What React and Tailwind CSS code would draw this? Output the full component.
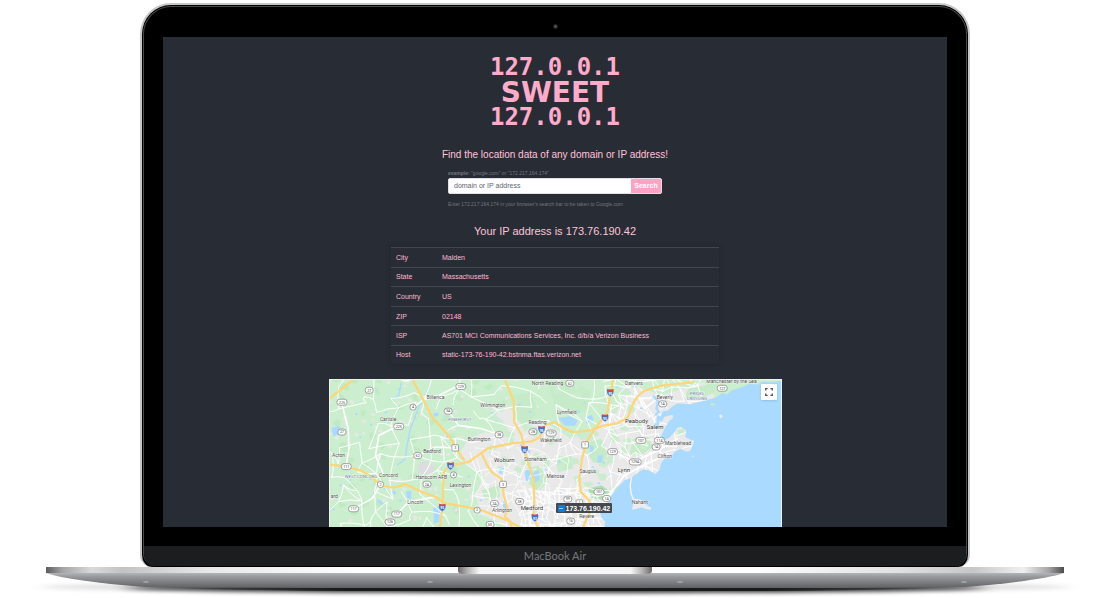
import React from "react";

const details = [
  ["City", "Malden"],
  ["State", "Massachusetts"],
  ["Country", "US"],
  ["ZIP", "02148"],
  ["ISP", "AS701 MCI Communications Services, Inc. d/b/a Verizon Business"],
  ["Host", "static-173-76-190-42.bstnma.ftas.verizon.net"],
];

function seeded(seed) {
  let s = seed;
  return () => {
    s = (s * 16807) % 2147483647;
    return s / 2147483647;
  };
}

// Jittered grid of side streets: [x, y] nodes joined to their right and lower neighbours.
function streets(x0, y0, x1, y1, cell, keep, seed) {
  const rnd = seeded(seed);
  const cols = Math.ceil((x1 - x0) / cell) + 1;
  const rows = Math.ceil((y1 - y0) / cell) + 1;
  const at = [];
  for (let r = 0; r < rows; r++) {
    at.push([]);
    for (let c = 0; c < cols; c++) {
      at[r].push([
        Math.round(x0 + c * cell + (rnd() - 0.5) * cell * 0.9),
        Math.round(y0 + r * cell + (rnd() - 0.5) * cell * 0.9),
      ]);
    }
  }
  let d = "";
  const join = (a, b) => {
    const mx = Math.round((a[0] + b[0]) / 2 + (rnd() - 0.5) * cell * 0.35);
    const my = Math.round((a[1] + b[1]) / 2 + (rnd() - 0.5) * cell * 0.35);
    d += `M${a[0]} ${a[1]}Q${mx} ${my} ${b[0]} ${b[1]}`;
  };
  for (let r = 0; r < rows; r++) {
    for (let c = 0; c < cols; c++) {
      if (c + 1 < cols && rnd() < keep) join(at[r][c], at[r][c + 1]);
      if (r + 1 < rows && rnd() < keep) join(at[r][c], at[r + 1][c]);
      if (r + 1 < rows && c + 1 < cols && rnd() < keep * 0.25) join(at[r][c], at[r + 1][c + 1]);
    }
  }
  return d;
}

function blobs(x0, y0, x1, y1, n, size, seed) {
  const rnd = seeded(seed);
  let d = "";
  for (let i = 0; i < n; i++) {
    const cx = x0 + rnd() * (x1 - x0);
    const cy = y0 + rnd() * (y1 - y0);
    const k = 7;
    for (let j = 0; j < k; j++) {
      const a = (j / k) * Math.PI * 2;
      const rad = size * (0.4 + rnd() * 0.8);
      d += `${j ? "L" : "M"}${Math.round(cx + Math.cos(a) * rad * 1.2)} ${Math.round(cy + Math.sin(a) * rad)}`;
    }
    d += "Z";
  }
  return d;
}

const sideStreets = streets(0, 0, 1000, 460, 50, 0.6, 71);
const cityStreets = streets(585, 345, 880, 460, 17, 0.8, 19);
const townStreets = streets(460, 220, 730, 400, 27, 0.6, 41);
const shoreStreets = streets(850, 10, 1110, 300, 28, 0.55, 97);
const clearings = blobs(10, 10, 640, 450, 120, 6, 23);
const groves = blobs(10, 10, 560, 450, 45, 13, 57);
const parks = blobs(500, 20, 960, 340, 60, 14, 131);
const ponds = blobs(20, 30, 960, 440, 50, 4, 311);

const towns = [
  [331, 70, "Billerica"], [503, 94, "Wilmington"], [188, 138, "Carlisle"], [638, 147, "Reading"],
  [462, 198, "Burlington"], [320, 232, "Bedford"], [39, 244, "Acton"], [189, 305, "Concord"],
  [318, 311, "Hanscom AFB"], [406, 335, "Lexington"], [270, 387, "Lincoln"], [531, 412, "Arlington"],
  [631, 257, "Stoneham"], [26, 369, "ard"], [668, 28, "North Reading"], [678, 200, "Wakefield"],
  [692, 308, "Melrose"], [928, 28, "Danvers"], [1021, 70, "Beverly"], [726, 117, "Lynnfield"],
  [789, 293, "Saugus"], [1021, 249, "Clifton"], [946, 386, "Nahant"], [786, 430, "Revere"],
  [1061, 209, "Marblehead"], [1222, 23, "Manchester by the Sea"],
];
const cities = [
  [538, 259, "Woburn"], [621, 406, "Medford"], [898, 291, "Lynn"], [936, 143, "Peabody"], [992, 162, "Salem"],
];
const shields = [
  [131, 44, "27"], [49, 80, "225"], [263, 95, "4"], [407, 33, "129"], [369, 107, "3A"], [220, 153, "225"],
  [49, 170, "27"], [277, 241, "62"], [62, 274, "111"], [165, 328, "2"], [305, 327, "2A"], [385, 299, "4"],
  [522, 178, "38"], [624, 169, "28"], [679, 173, "129"], [84, 401, "117"], [214, 417, "117"], [194, 441, "126"],
  [508, 385, "2A"], [584, 379, "38"], [456, 405, "2"], [495, 448, "60"], [735, 23, "62"], [1015, 85, "1A"],
  [1194, 38, "127"], [949, 195, "107"], [1005, 195, "114"], [995, 215, "1A"], [864, 229, "129"],
  [932, 260, "129A"], [823, 350, "107"], [846, 370, "1A"], [729, 372, "99"], [738, 438, "16"],
];
const squareShields = [[390, 218, "3"], [534, 328, "3"], [781, 209, "1"], [764, 384, "1"]];
const interstates = [
  [376, 272, "95"], [351, 397, "95"], [650, 163, "95"], [599, 223, "93"], [630, 428, "93"], [857, 51, "95"], [841, 127, "95"],
];

const highways = [
  "M13 68L50 38L84 12",
  "M262 13L290 65L320 125L370 180L400 230L418 256",
  "M540 13L566 75L568 140L590 180L598 222L612 270L626 310L628 370L627 425L638 456",
  "M344 456L352 395L354 330L356 290L372 272L430 260L470 232L490 218L560 204L620 198L645 185L662 148L690 140L715 158L745 170L800 165L830 152L880 143L910 125L925 85L940 62L960 45L1010 30L1065 24L1110 20",
  "M865 13L858 55L848 110L808 164L785 200L772 250L764 310L768 350L792 375L800 400L775 456",
  "M13 268L60 274L105 285L130 300L170 332L205 337L240 327L290 350L330 365L360 385L425 395L470 406L520 425L555 440L560 456",
  "M470 235L486 270L502 292L530 312L536 360L548 400L540 425L562 445L585 456",
];

const sea =
  "M1371 16L1340 20L1315 18L1300 27L1275 25L1250 36L1222 45L1208 57L1195 52L1175 66L1145 74L1095 86L1060 84L1045 92L1030 105L1015 108L1008 124L1000 118L996 130L1012 140L1020 124L1044 118L1047 126L1033 138L1025 152L1016 168L1010 182L1020 194L1036 186L1052 168L1058 158L1070 154L1086 166L1082 184L1104 196L1108 192L1107 206L1098 226L1086 229L1070 221L1054 226L1040 244L1020 250L1010 264L1006 282L993 297L975 286L955 282L937 295L920 308L900 315L880 335L862 358L852 376L840 396L825 410L832 430L842 440L838 460L1380 460L1380 13Z";

const halo = { paintOrder: "stroke" };

function TownMap() {
  return (
    <svg
      viewBox="13 13 1358 443"
      preserveAspectRatio="xMidYMid slice"
      className="block h-[147px] w-full"
      role="img"
      aria-label="Map of the area north of Boston"
    >
      <rect x="0" y="0" width="1400" height="480" fill="#cbeecf" />
      <path d={groves} fill="#c0e9c4" />
      <path d={clearings} fill="#e9e8e6" />
      <path d="M282 262L310 258L330 280L315 300L275 292Z" fill="#dddddf" />
      <path
        d="M470 90L500 85L530 110L550 90L572 120L600 170L640 130L700 165L740 190L770 175L800 200L830 120L900 90L890 30L960 40L1010 60L1140 20L1170 60L1120 300L820 470L560 470L520 440L470 420L450 360L480 300L430 270L400 240L430 190L480 170L560 190L540 140Z"
        fill="#e9e9ea"
      />
      <path
        d="M792 200L830 190L848 235L838 262L806 262L790 235ZM665 13L740 13L800 50L790 100L750 120L690 90ZM600 280L650 270L668 320L640 350L605 320ZM925 190L970 185L985 215L950 240L915 240ZM1090 40L1180 20L1170 50L1130 70L1080 72ZM1058 165L1078 160L1082 174L1062 180ZM470 345L520 330L525 365L480 375ZM690 245L740 240L745 280L700 290ZM560 60L620 50L640 110L600 150L572 130Z"
        fill="#c6ebc9"
      />
      <path d="M790 340L830 330L855 348L838 375L800 368Z" fill="#a9dfb1" />
      <path d={parks} fill="#cbecce" />
      <path
        d="M700 128L735 122L760 132L750 152L720 150ZM598 286L616 282L618 308L604 320ZM624 288L642 285L644 315L630 322ZM324 398L344 392L342 440L326 446ZM242 350L258 347L256 372L244 368ZM524 274L538 278L534 298L522 294ZM200 345L214 350L206 360ZM18 158L42 150L50 175L22 182ZM794 208L806 212L805 235L796 232ZM820 240L834 240L832 260L818 262ZM530 375L545 380L548 398L536 400ZM785 125L802 118L806 135L790 140ZM325 113L342 112L338 122L324 122ZM152 370L168 378L180 392L160 384Z"
        fill="#aadaff"
      />
      <path d={ponds} fill="#aadaff" />
      <path
        d="M312 30L302 62L282 90L270 122L255 160L245 210L240 250L215 270M200 70L220 60L228 20"
        fill="none"
        stroke="#aadaff"
        strokeWidth="4"
      />
      <g fill="none" stroke="#ffffff" strokeLinecap="round">
        <path d={sideStreets} strokeWidth="3" />
        <path d={townStreets} strokeWidth="2" />
        <path d={shoreStreets} strokeWidth="3" />
        <path d={cityStreets} strokeWidth="3" />
        <path
          d="M50 90L68 160L70 220L62 270M220 150L160 180L150 240L175 300M263 95L300 70L330 65L400 30M370 107L400 150L470 160L522 178M165 328L140 370L84 401M277 241L330 215L390 218M214 417L250 380L330 365M930 40L960 100L1010 60M870 230L930 260L1010 220L1060 190M860 350L900 300L960 270L1030 235"
          strokeWidth="5"
        />
      </g>
      <path d={sea} fill="#aadaff" />
      <path
        d="M1000 80L996 100L1003 108L992 120M986 60L1004 82M1000 130L1000 160M990 145L1012 160"
        fill="none"
        stroke="#aadaff"
        strokeWidth="7"
      />
      <path d="M921 306L917 330L919 352L926 372" fill="none" stroke="#f5f5f5" strokeWidth="4" />
      <path
        d="M923 370L945 372L958 380L966 390L981 398L978 405L960 400L950 396L940 400L922 404L926 388ZM1184 120L1192 116L1196 124L1188 129ZM1103 241L1108 242L1105 247Z"
        fill="#ececec"
      />
      <path d="M1159 82L1172 85L1170 92L1160 89Z" fill="#c6ebc9" />
      <g fill="none" strokeLinejoin="round">
        {highways.map((d) => (
          <path key={d} d={d} stroke="#fbd77c" strokeWidth="7" />
        ))}
      </g>
      <g fontFamily="Roboto, sans-serif" textAnchor="middle">
        <g fontSize="11" fill="#444444" stroke="#777777">
          {shields.map(([x, y, n]) => (
            <g key={`${x}-${y}`}>
              <rect
                x={x - 6 - n.length * 3}
                y={y - 9}
                width={12 + n.length * 6}
                height="18"
                rx="8"
                fill="#ffffff"
                strokeWidth="2"
              />
              <text x={x} y={y + 4} stroke="none">{n}</text>
            </g>
          ))}
          {squareShields.map(([x, y, n]) => (
            <g key={`${x}-${y}`}>
              <rect x={x - 10} y={y - 10} width="20" height="19" rx="3" fill="#ffffff" strokeWidth="2" />
              <text x={x} y={y + 4} stroke="none">{n}</text>
            </g>
          ))}
        </g>
        {interstates.map(([x, y, n]) => (
          <g key={`${x}-${y}`}>
            <path
              d={`M${x - 9} ${y - 11}Q${x} ${y - 7} ${x + 9} ${y - 11}Q${x + 15} ${y + 4} ${x} ${y + 12}Q${x - 15} ${y + 4} ${x - 9} ${y - 11}Z`}
              fill="#4272c4"
              stroke="#ffffff"
              strokeWidth="1"
            />
            <path d={`M${x - 9} ${y - 11}Q${x} ${y - 7} ${x + 9} ${y - 11}L${x + 10} ${y - 5}H${x - 10}Z`} fill="#d3484c" />
            <text x={x} y={y + 6} fontSize="10" fontWeight="700" fill="#ffffff">{n}</text>
          </g>
        ))}
        <g stroke="#ffffff" strokeWidth="2" strokeLinejoin="round">
          <g fontSize="15" fill="#4a4a4a">
            {towns.map(([x, y, n]) => (
              <text key={n} x={x} y={y} style={halo}>{n}</text>
            ))}
          </g>
          <g fontSize="18" fill="#333333">
            {cities.map(([x, y, n]) => (
              <text key={n} x={x} y={y} style={halo}>{n}</text>
            ))}
          </g>
          <g fontSize="13" fill="#66759c">
            <text x="404" y="137" style={halo}>PINEHURST</text>
            <text x="106" y="307" style={halo}>WEST CONCORD</text>
            <text x="1118" y="59" style={halo}>PRIDES</text>
            <text x="1118" y="73" style={halo}>CROSSING</text>
          </g>
        </g>
      </g>
    </svg>
  );
}

function Base() {
  return (
    <svg viewBox="0 0 1110 31" preserveAspectRatio="none" className="block h-[31px] w-full" aria-hidden="true">
      <defs>
        <linearGradient id="deck" x1="0" x2="1" y1="0" y2="0">
          <stop offset="0" stopColor="#5c5c5c" />
          <stop offset="0.016" stopColor="#a4a4a4" />
          <stop offset="0.045" stopColor="#d9d9d9" />
          <stop offset="0.075" stopColor="#c2c2c2" />
          <stop offset="0.16" stopColor="#e8e8e8" />
          <stop offset="0.3" stopColor="#fdfdfd" />
          <stop offset="0.7" stopColor="#fdfdfd" />
          <stop offset="0.84" stopColor="#e0e0e0" />
          <stop offset="0.91" stopColor="#c6c6c6" />
          <stop offset="0.96" stopColor="#efefef" />
          <stop offset="0.985" stopColor="#a4a4a4" />
          <stop offset="1" stopColor="#4c4c4c" />
        </linearGradient>
        <linearGradient id="belly" x1="0" x2="0" y1="0" y2="1">
          <stop offset="0" stopColor="#b3b4b7" />
          <stop offset="0.25" stopColor="#98999c" />
          <stop offset="1" stopColor="#5f6063" />
        </linearGradient>
        <linearGradient id="notch" x1="0" x2="1" y1="0" y2="0">
          <stop offset="0" stopColor="#6d6a69" />
          <stop offset="0.05" stopColor="#b5b3b2" />
          <stop offset="0.11" stopColor="#f6f6f6" />
          <stop offset="0.89" stopColor="#f6f6f6" />
          <stop offset="0.95" stopColor="#b5b3b2" />
          <stop offset="1" stopColor="#6d6a69" />
        </linearGradient>
        <linearGradient id="under" x1="0" x2="1" y1="0" y2="0">
          <stop offset="0" stopColor="#1a1a1c" stopOpacity="0" />
          <stop offset="0.25" stopColor="#1a1a1c" />
          <stop offset="0.75" stopColor="#1a1a1c" />
          <stop offset="1" stopColor="#1a1a1c" stopOpacity="0" />
        </linearGradient>
        <filter id="soft" x="-5%" y="-80%" width="110%" height="260%">
          <feGaussianBlur stdDeviation="9 2" />
        </filter>
      </defs>
      <ellipse cx="555" cy="20" rx="515" ry="6" fill="#000000" opacity="0.12" filter="url(#soft)" />
      <ellipse cx="555" cy="21" rx="430" ry="5" fill="#000000" opacity="0.75" filter="url(#soft)" />
      <path d="M140 20L970 20Q860 24 760 24H350Q250 24 140 20Z" fill="url(#under)" />
      <path d="M46 6H1064Q1040 14 965 20Q900 21 760 21H350Q210 21 145 20Q70 14 46 6Z" fill="url(#belly)" />
      <rect x="46" y="0" width="1018" height="6" fill="url(#deck)" />
      <path d="M458 0H652V4Q652 7 646 7H464Q458 7 458 4Z" fill="url(#notch)" />
      <g fill="#a3a3a6">
        <ellipse cx="146" cy="15" rx="3" ry="1" />
        <ellipse cx="430" cy="15" rx="3" ry="1" />
        <ellipse cx="680" cy="15" rx="3" ry="1" />
        <ellipse cx="964" cy="15" rx="3" ry="1" />
      </g>
    </svg>
  );
}

export default function App() {
  return (
    <main className="bg-white pt-[3px] font-['Liberation_Sans',Arial,sans-serif]">
      <div className="px-[12.6%]">
        <div className="rounded-t-[31px] rounded-b-[12px] border-2 border-b-0 border-[#c6c8c7] bg-black px-px pt-px">
          <div className="overflow-hidden rounded-t-[28px] rounded-b-[14px] border border-b-0 border-[#48494a]">
            <div className="flex h-[30px] items-center justify-center pt-2">
              <span className="size-[5px] rounded-full border border-[#222224] bg-[#4a4b4e]" />
            </div>
            <div className="mx-[19px] flex flex-col items-center overflow-hidden bg-[#282c35] pt-[18px] text-[#ffc4d9]">
              <h1 className="text-center font-['DejaVu_Sans_Mono',monospace] text-[24px] leading-[25px] font-bold text-[#ffabc9]">
                <span className="block">127.0.0.1</span>
                <span className="block font-['DejaVu_Sans',sans-serif] text-[28px]">SWEET</span>
                <span className="block">127.0.0.1</span>
              </h1>
              <h2 className="mt-[17px] text-[10px] leading-4">
                Find the location data of any domain or IP address!
              </h2>
              <form className="mt-[6px] w-[214px] max-w-full" onSubmit={(e) => e.preventDefault()}>
                <label htmlFor="query" className="block text-[5px] leading-[8px] whitespace-nowrap text-[#717780]">
                  <b>example:</b> "google.com" or "172.217.164.174"
                </label>
                <div className="mt-px flex h-4 overflow-hidden rounded-[2px] border border-[#e4dfe3] bg-white">
                  <input
                    id="query"
                    type="text"
                    placeholder="domain or IP address"
                    className="min-w-0 flex-1 px-[5px] text-[7px] text-gray-700 outline-none placeholder:text-[#5d656e]"
                  />
                  <button type="submit" className="w-[30px] bg-[#ffa3c4] text-[7px] font-bold text-white">
                    Search
                  </button>
                </div>
                <p className="mt-[6px] text-[5px] leading-[8px] whitespace-nowrap text-[#717780]">
                  Enter 172.217.164.174 in your browser's search bar to be taken to Google.com
                </p>
              </form>
              <h2 className="mt-[15px] text-[11px] leading-4">Your IP address is 173.76.190.42</h2>
              <table className="mt-2 h-[117px] w-[328px] max-w-full border-collapse text-left text-[7px] leading-[9px] text-[#ffb9d2] shadow-[0_0_6px_rgba(0,0,0,0.2)]">
                <tbody>
                  {details.map(([name, value]) => (
                    <tr key={name} className="border-t border-[#424650]">
                      <th scope="row" className="w-[46px] pl-[5px] font-normal">{name}</th>
                      <td className="pl-[5px]">{value}</td>
                    </tr>
                  ))}
                </tbody>
              </table>
              <div className="relative mt-[15px] w-[453px] max-w-full border border-b-0 border-[#eef3ee]">
                <TownMap />
                <button
                  type="button"
                  aria-label="Toggle fullscreen view"
                  className="absolute top-1 right-1 flex size-4 items-center justify-center rounded-[1px] bg-white shadow-sm"
                >
                  <svg viewBox="0 0 8 8" className="size-2" fill="none" stroke="#555555" strokeWidth="1.3" aria-hidden="true">
                    <path d="M0.7 2.6V0.7H2.6M5.4 0.7H7.3V2.6M7.3 5.4V7.3H5.4M2.6 7.3H0.7V5.4" />
                  </svg>
                </button>
                <div className="absolute top-[123px] left-[226px] flex h-[10px] items-center gap-px rounded-[1px] bg-[#45484c] px-[2px] text-[7px] leading-[9px] font-bold whitespace-nowrap text-white">
                  <span className="flex size-[7px] items-center justify-center rounded-[1px] bg-[#1479d7]">
                    <span className="h-px w-1 bg-[#8fd0ff]" />
                  </span>
                  173.76.190.42
                </div>
              </div>
            </div>
            <div className="h-[19px]" />
            <div className="flex h-[21px] items-center justify-center border-b border-black bg-[#1c1d1f] font-['Lato',sans-serif] text-[11px] leading-5 text-[#77787b]">
              MacBook Air
            </div>
          </div>
        </div>
      </div>
      <Base />
    </main>
  );
}
